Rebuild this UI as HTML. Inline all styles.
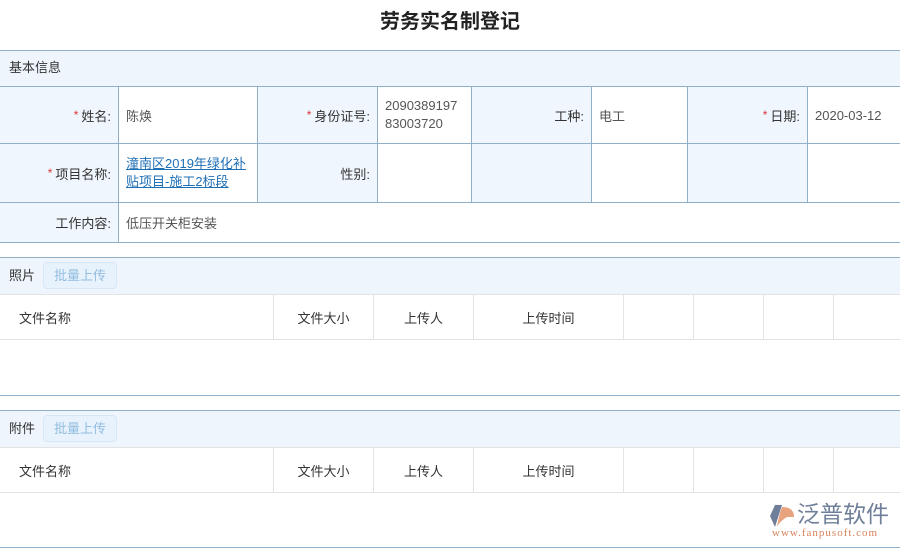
<!DOCTYPE html>
<html><head><meta charset="utf-8"><style>
*{margin:0;padding:0;box-sizing:border-box}
body{width:900px;height:549px;background:#fff;font-family:"Liberation Sans","Noto Sans CJK SC",sans-serif;font-size:13px;color:#333;position:relative;overflow:hidden}
.a{position:absolute}
.title{left:0;top:5px;width:900px;text-align:center;font-size:20px;font-weight:bold;color:#222}
.hd{background:#eef5fd;border-top:1px solid #8fb0c8;display:flex;align-items:center;padding:0 9px 4px}
.c{position:absolute;border-right:1px solid #8fb0c8;border-bottom:1px solid #8fb0c8;display:flex;align-items:center;padding:0 7px}
.l{background:#f0f6fd;justify-content:flex-end}
.s{color:#d9383a;margin-right:3px;font-size:12px}
.btn{position:absolute;left:43px;width:74px;height:27px;border:1px solid #d6e6f5;border-radius:4px;background:#e8f2fc;color:#92bde0;text-align:center;line-height:25px;font-size:13px}
.t{position:absolute;border-right:1px solid #e3e3e3;border-bottom:1px solid #e3e3e3;display:flex;align-items:center;justify-content:center}
</style></head><body>
<div class="a title">劳务实名制登记</div>
<div class="a hd" style="left:0;top:50px;width:900px;height:37px;border-bottom:1px solid #8fb0c8">基本信息</div>

<div class="c l" style="left:0;top:87px;width:119px;height:57px"><span class="s">*</span>姓名:</div>
<div class="c" style="left:119px;top:87px;width:139px;height:57px;color:#555">陈焕</div>
<div class="c l" style="left:258px;top:87px;width:120px;height:57px"><span class="s">*</span>身份证号:</div>
<div class="c" style="left:378px;top:87px;width:94px;height:57px;color:#555;line-height:18px">2090389197<br>83003720</div>
<div class="c l" style="left:472px;top:87px;width:120px;height:57px">工种:</div>
<div class="c" style="left:592px;top:87px;width:96px;height:57px;color:#555">电工</div>
<div class="c l" style="left:688px;top:87px;width:120px;height:57px"><span class="s">*</span>日期:</div>
<div class="c" style="left:808px;top:87px;width:92px;height:57px;color:#555;border-right:0">2020-03-12</div>

<div class="c l" style="left:0;top:144px;width:119px;height:59px"><span class="s">*</span>项目名称:</div>
<div class="c" style="left:119px;top:144px;width:139px;height:59px;color:#1f6fb5;text-decoration:underline;line-height:18px">潼南区2019年绿化补<br>贴项目-施工2标段</div>
<div class="c l" style="left:258px;top:144px;width:120px;height:59px">性别:</div>
<div class="c" style="left:378px;top:144px;width:94px;height:59px"></div>
<div class="c l" style="left:472px;top:144px;width:120px;height:59px"></div>
<div class="c" style="left:592px;top:144px;width:96px;height:59px"></div>
<div class="c l" style="left:688px;top:144px;width:120px;height:59px"></div>
<div class="c" style="left:808px;top:144px;width:92px;height:59px;border-right:0"></div>

<div class="c l" style="left:0;top:203px;width:119px;height:40px">工作内容:</div>
<div class="c" style="left:119px;top:203px;width:781px;height:40px;color:#555;border-right:0">低压开关柜安装</div>

<div class="a hd" style="left:0;top:257px;width:900px;height:38px;border-bottom:1px solid #e3e3e3">照片</div>
<div class="btn" style="top:262px">批量上传</div>
<div class="t" style="left:0;top:295px;width:274px;height:45px;justify-content:flex-start;padding-left:19px">文件名称</div>
<div class="t" style="left:274px;top:295px;width:100px;height:45px">文件大小</div>
<div class="t" style="left:374px;top:295px;width:100px;height:45px">上传人</div>
<div class="t" style="left:474px;top:295px;width:150px;height:45px">上传时间</div>
<div class="t" style="left:624px;top:295px;width:70px;height:45px"></div>
<div class="t" style="left:694px;top:295px;width:70px;height:45px"></div>
<div class="t" style="left:764px;top:295px;width:70px;height:45px"></div>
<div class="t" style="left:834px;top:295px;width:66px;height:45px;border-right:0"></div>
<div class="a" style="left:0;top:395px;width:900px;height:1px;background:#8fb0c8"></div>

<div class="a hd" style="left:0;top:410px;width:900px;height:38px;border-bottom:1px solid #e3e3e3">附件</div>
<div class="btn" style="top:415px">批量上传</div>
<div class="t" style="left:0;top:448px;width:274px;height:45px;justify-content:flex-start;padding-left:19px">文件名称</div>
<div class="t" style="left:274px;top:448px;width:100px;height:45px">文件大小</div>
<div class="t" style="left:374px;top:448px;width:100px;height:45px">上传人</div>
<div class="t" style="left:474px;top:448px;width:150px;height:45px">上传时间</div>
<div class="t" style="left:624px;top:448px;width:70px;height:45px"></div>
<div class="t" style="left:694px;top:448px;width:70px;height:45px"></div>
<div class="t" style="left:764px;top:448px;width:70px;height:45px"></div>
<div class="t" style="left:834px;top:448px;width:66px;height:45px;border-right:0"></div>
<div class="a" style="left:0;top:547px;width:900px;height:1px;background:#8fb0c8"></div>

<svg class="a" style="left:769px;top:504px" width="28" height="24" viewBox="0 0 28 24"><polygon points="6,1 13,1 6,23 1,12" fill="#6f7f99"/><path d="M13,3 Q25,3 25,13 L18,13 Q10,18 8,23 Q10,10 13,3Z" fill="#e8a37f"/></svg>
<div class="a" style="left:797px;top:499px;font-size:23px;color:#6f7f99;line-height:30px;white-space:nowrap">泛普软件</div>
<div class="a" style="left:772px;top:527px;font-size:11px;color:#d9825a;font-family:'Liberation Serif',serif;letter-spacing:1px;white-space:nowrap">www.fanpusoft.com</div>
</body></html>
